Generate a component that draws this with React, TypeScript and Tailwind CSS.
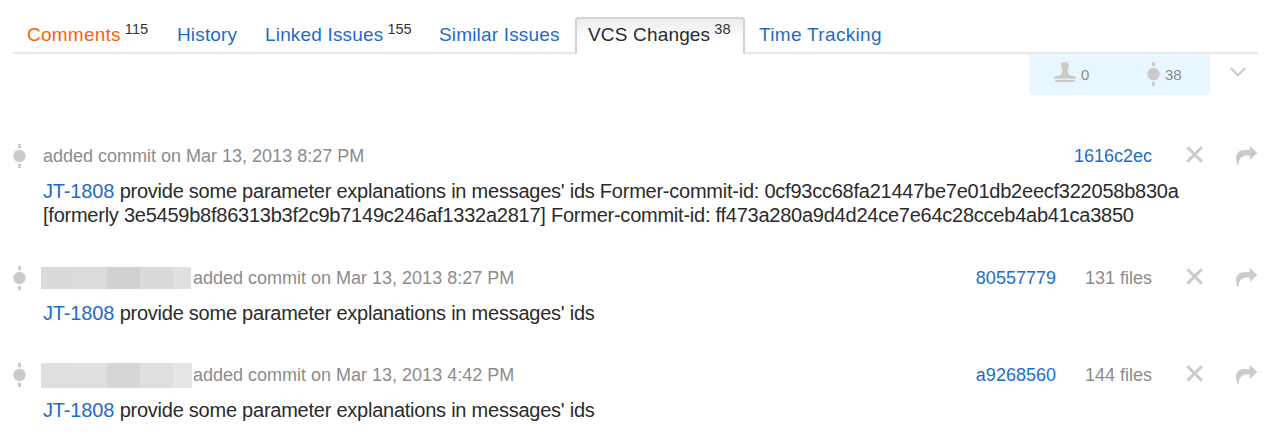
import React from "react";

const tabs = [
  { label: "Comments", count: "115", box: "w-[150px] text-[#f9610f] tracking-[0.25px]", gap: "ml-[4px]" },
  { label: "History", box: "w-[88px] text-[#1f6bc8] tracking-[0.15px]" },
  { label: "Linked Issues", count: "155", box: "w-[174px] text-[#1f6bc8] tracking-[0.17px]", gap: "ml-[4px]" },
  { label: "Similar Issues", box: "w-[136px] text-[#1f6bc8] tracking-[0.17px]" },
  { label: "VCS Changes", count: "38", active: true, gap: "ml-[4px]" },
  { label: "Time Tracking", box: "ml-[14px] text-[#1f6bc8] tracking-[0.33px]" },
];

type Commit = {
  time: string;
  hash: string;
  files?: string;
  author?: string[];
  authorSize?: string;
  text: string[];
  row: string;
};

const commits: Commit[] = [
  {
    time: "8:27 PM",
    hash: "1616c2ec",
    text: [
      "provide some parameter explanations in messages' ids Former-commit-id: 0cf93cc68fa21447be7e01db2eecf322058b830a",
      "[formerly 3e5459b8f86313b3f2c9b7149c246af1332a2817] Former-commit-id: ff473a280a9d4d24ce7e64c28cceb4ab41ca3850",
    ],
    row: "h-[122px]",
  },
  {
    time: "8:27 PM",
    hash: "80557779",
    files: "131 files",
    author: ["bg-[#dadada]", "bg-[#dcdcdc]", "bg-[#d0d0d0]", "bg-[#dadada]", "bg-[#e0e0e0]"],
    authorSize: "h-[22px] w-[150px] mr-[2px]",
    text: ["provide some parameter explanations in messages' ids"],
    row: "h-[97px]",
  },
  {
    time: "4:42 PM",
    hash: "a9268560",
    files: "144 files",
    author: ["bg-[#dfdfdf]", "bg-[#e0e0e0]", "bg-[#d6d6d6]", "bg-[#dfdfdf]", "bg-[#e5e5e5]"],
    authorSize: "h-[25px] w-[151px] mr-px",
    text: ["provide some parameter explanations in messages' ids"],
    row: "h-[74px]",
  },
];

function CommitIcon() {
  return (
    <svg width="13" height="24" viewBox="0 0 13 24" fill="#cbcbcb" className="block shrink-0">
      <rect x="5" y="0" width="3" height="4.3" />
      <circle cx="6.5" cy="12" r="6.2" />
      <rect x="5" y="19.7" width="3" height="4.3" />
    </svg>
  );
}

function StampIcon() {
  return (
    <svg width="22" height="20" viewBox="0 0 22 20" fill="#cbcbcb" className="block shrink-0">
      <path d="M11 0a3.9 3.9 0 0 1 3.9 3.9c0 1.6-1.2 2.6-1.2 4.1 0 3.4 1.2 5.7 4.1 5.9H20a2 2 0 0 1 2 2v.8H0v-.8a2 2 0 0 1 2-2h2.2c2.9-.2 4.1-2.5 4.1-5.9 0-1.5-1.2-2.5-1.2-4.1A3.9 3.9 0 0 1 11 0Z" />
      <rect x="1.2" y="17.9" width="19.8" height="2.1" />
    </svg>
  );
}

function CloseIcon() {
  return (
    <svg width="17" height="17" viewBox="0 0 17 17" className="block shrink-0" stroke="#cbcbcb" strokeWidth="3">
      <path d="M1.4 1.2 15.8 15.6M15.8 1.2 1.4 15.6" />
    </svg>
  );
}

function ShareIcon() {
  return (
    <svg width="22" height="19" viewBox="0 0 22 19" className="block shrink-0" fill="#cbcbcb">
      <path d="M13.8 0 21.4 7 13.8 13.9V9.6C8.2 9.2 2.9 10 2.8 18.8H1.6C-1.4 11.5-.6 4 9.5 4H13.8Z" />
    </svg>
  );
}

function CommitRow({ c }: { c: Commit }) {
  return (
    <article className={`flex shrink-0 ${c.row}`}>
      <div className="w-7 shrink-0">
        <CommitIcon />
      </div>
      <div className="flex grow flex-col">
        <div className="flex h-6 items-center text-[18px] leading-6 text-[#8c8c8c]">
          {c.author && (
            <div className={`flex shrink-0 ${c.authorSize}`}>
              {c.author.map((tone, i) => (
                <span key={i} className={`${i < 4 ? "w-[33px]" : "grow"} ${tone}`} />
              ))}
            </div>
          )}
          <span className={`grow whitespace-nowrap ${c.author ? "" : "ml-[2px]"}`}>added commit on Mar 13, 2013 {c.time}</span>
          <span className="text-[#1f6bc8]">{c.hash}</span>
          {c.files && <span className="ml-[29px]">{c.files}</span>}
          <span className="mr-[33px] ml-[34px] -mt-[3px] w-[17px]">
            <CloseIcon />
          </span>
          <span className="-mt-[2px] w-[22px]">
            <ShareIcon />
          </span>
        </div>
        <div className="mt-[11px] ml-[2px] text-[20px] leading-6 tracking-[-0.24px] whitespace-nowrap text-[#2b2b2b]">
          {c.text.map((line, i) => (
            <p key={i}>
              {i === 0 && <span className="tracking-[-0.15px] text-[#1f6bc8]">JT-1808 </span>}
              {line}
            </p>
          ))}
        </div>
      </div>
    </article>
  );
}

export default function App() {
  return (
    <main className="flex h-[438px] w-[1288px] flex-col overflow-hidden bg-white pr-[30px] pl-[13px] font-['Liberation_Sans',Arial,sans-serif]">
      <nav className="flex h-[54px] shrink-0 bg-linear-to-b from-transparent from-[52px] via-[#e4e4e4] via-[52px] to-[#ebebeb] pt-[17px] pl-[14px] text-[19px] leading-[35px] whitespace-nowrap">
        {tabs.map((t) => (
          <a
            key={t.label}
            className={
              t.active
                ? "flex h-[37px] w-[170px] rounded-t-[3px] border-2 border-b-0 border-[#d3d3d3] bg-linear-to-b from-[#ededed] to-white to-60% pl-[11px] leading-[31px] tracking-[0.17px] text-[#2b2b2b]"
                : `flex ${t.box}`
            }
          >
            <span>{t.label}</span>
            {t.count && (
              <span className={`-mt-[5px] text-[14.6px] tracking-normal text-[#333] ${t.gap}`}>{t.count}</span>
            )}
          </a>
        ))}
      </nav>
      <div className="flex h-[90px] shrink-0 justify-end">
        <div className="flex h-[41px] w-[181px] rounded-b-[5px] bg-[#e8f7ff] pl-[25px] text-[15px] leading-[41px] text-[#8c8c8c]">
          <div className="flex w-[93px]">
            <div className="mt-2">
              <StampIcon />
            </div>
            <span className="ml-[5px]">0</span>
          </div>
          <div className="flex">
            <div className="mt-2">
              <CommitIcon />
            </div>
            <span className="ml-[5px]">38</span>
          </div>
        </div>
        <svg width="16" height="10" viewBox="0 0 16 10" className="mt-[13px] mr-[12px] ml-5" fill="none" stroke="#cbcbcb" strokeWidth="2.3">
          <path d="m.8 1 7.2 7.2L15.2 1" />
        </svg>
      </div>
      <section className="flex flex-col">
        {commits.map((c) => (
          <CommitRow key={c.hash} c={c} />
        ))}
      </section>
    </main>
  );
}
